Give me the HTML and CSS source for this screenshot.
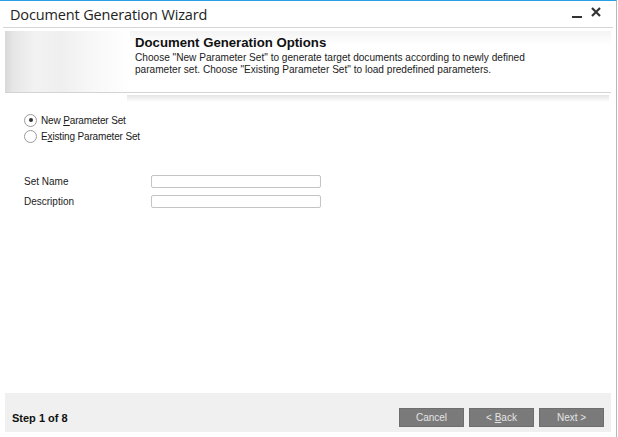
FILE: index.html
```html
<!DOCTYPE html>
<html>
<head>
<meta charset="utf-8">
<link rel="stylesheet" href="styles.css">
</head>
<body>
<div class="window">
  <div class="titlebar">
    <span class="title">Document Generation Wizard</span>
    <div class="controls">
      <span class="min"></span>
      <svg class="close" width="10" height="10" viewBox="0 0 10 10"><path d="M1 1 L9 9 M9 1 L1 9" stroke="#333" stroke-width="2.2"/></svg>
    </div>
  </div>
  <div class="banner">
    <div class="banner-art"></div>
    <div class="banner-text">
      <div class="banner-title">Document Generation Options</div>
      <div class="banner-desc">Choose "New Parameter Set" to generate target documents according to newly defined<br>parameter set. Choose "Existing Parameter Set" to load predefined parameters.</div>
    </div>
  </div>
  <div class="banner-shadow"></div>
  <div class="content">
    <div class="radios">
      <label class="radio"><span class="dot checked"></span><span class="rtext">New <u>P</u>arameter Set</span></label>
      <label class="radio"><span class="dot"></span><span class="rtext">E<u>x</u>isting Parameter Set</span></label>
    </div>
    <div class="form">
      <div class="row"><span class="lbl">Set Name</span><span class="input"></span></div>
      <div class="row"><span class="lbl">Description</span><span class="input"></span></div>
    </div>
  </div>
  <div class="footer">
    <span class="step">Step 1 of 8</span>
    <div class="buttons">
      <span class="btn"><span>Cancel</span></span>
      <span class="btn"><span>&lt; <u>B</u>ack</span></span>
      <span class="btn"><span>Next &gt;</span></span>
    </div>
  </div>
</div>
</body>
</html>
```
FILE: styles.css
```css
html, body { margin: 0; padding: 0; background: #fff; }
body { font-family: "Liberation Sans", Arial, sans-serif; font-size: 11px; color: #1a1a1a; }
.window {
  width: 617px; height: 437px;
  border-top: 1px solid #2b9fe6;
  border-right: 1px solid #b8b8b8;
  display: flex; flex-direction: column;
  box-sizing: border-box;
}
.titlebar {
  height: 26px; display: flex; align-items: center; justify-content: space-between;
  padding: 0 10px 0 7px;
  border-bottom: 1px solid #d6d6d6;
  margin: 0 3px;
}
.title { font-family: "Open Sans", "Noto Sans", sans-serif; font-size: 14.5px; color: #222; letter-spacing: -0.15px; }
.controls { display: flex; align-items: center; gap: 9px; padding-right: 2px; margin-top: -4px; }
.min { width: 10px; height: 2px; background: #333; margin-top: 10px; }
.banner {
  margin: 3px 5px 0 5px; height: 61px;
  display: flex;
  border-bottom: 1px solid #d4d4d4;
  background: linear-gradient(to bottom, #f4f4f4 0px, #ffffff 14px);
}
.banner-art {
  width: 125px;
  background: linear-gradient(to right, #d8d8d8 0px, #e6e6e6 8px, #f2f2f2 30px, #efefef 55px, #f7f7f7 85px, #ffffff 125px);
}
.banner-text { padding-top: 4px; padding-left: 5px; }
.banner-title { font-weight: bold; font-size: 13.2px; color: #111; line-height: 15px; }
.banner-desc { font-size: 10.1px; line-height: 12px; margin-top: 2px; color: #222; }
.banner-shadow {
  margin: 2px 7px 0 127px; height: 7px;
  background: linear-gradient(to bottom, #e4e4e4, #ffffff);
}
.content { flex: 1; padding: 12px 0 0 24px; }
.radios { display: flex; flex-direction: column; gap: 4px; }
.radio { display: flex; align-items: center; gap: 4px; height: 12px; }
.rtext { font-size: 10px; letter-spacing: -0.15px; }
.dot { width: 11px; height: 11px; border: 1px solid #9a9a9a; border-radius: 50%; box-sizing: content-box; display: flex; align-items: center; justify-content: center; background: #fff; }
.dot.checked::after { content: ""; width: 4px; height: 4px; border-radius: 50%; background: #333; }
.form { margin-top: 33px; display: flex; flex-direction: column; gap: 7px; }
.row { display: flex; align-items: center; height: 13px; }
.lbl { width: 127px; font-size: 10px; }
.input { width: 168px; height: 11px; border: 1px solid #c4c4c4; border-radius: 2px; background: #fff; }
.footer {
  margin: 0 5px 5px 5px; height: 39px; background: #f0f0f0;
  display: flex; align-items: flex-end; justify-content: space-between;
  padding: 0 7px 5px 7px; box-sizing: border-box;
}
.step { font-weight: bold; font-size: 11px; color: #111; padding-bottom: 3px; }
.buttons { display: flex; gap: 5px; }
.btn {
  width: 65px; height: 19px; background: #7a7a7a; color: #e4e4e4;
  display: flex; align-items: center; justify-content: center;
  font-size: 10px; border: 1px solid #6e6e6e; box-sizing: border-box;
}
```
